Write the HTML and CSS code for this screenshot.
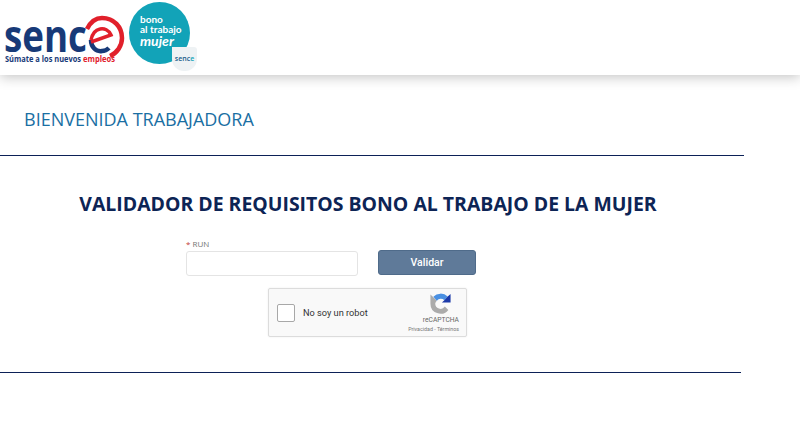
FILE: index.html
```html
<!DOCTYPE html>
<html lang="es">
<head>
<meta charset="utf-8">
<title>Validador de requisitos</title>
<link rel="stylesheet" href="styles.css">
</head>
<body>
<header class="topbar">
  <svg class="logo-sence" viewBox="0 0 128 70" width="128" height="70" aria-label="sence">
    <text class="sence-word" x="4" y="52" textLength="83" lengthAdjust="spacingAndGlyphs">senc</text>
    <path class="sence-arc" d="M87 29 C91 21 97 18 102 18 C114 18 122 27 122 38 C122 46 117 53 110 56" />
    <path class="sence-e-blue" d="M91 40 C91 47 96 52 102 51 C105 51 107 50 109 48" />
    <path class="sence-e-red" d="M91 42 L111 35 C109 30 104 28 100 29 C95 30 92 35 91 40" />
    <text class="sence-tag" x="5" y="62" textLength="76" lengthAdjust="spacingAndGlyphs">Súmate a los nuevos</text>
    <text class="sence-tag sence-tag-red" x="83" y="62" textLength="32" lengthAdjust="spacingAndGlyphs">empleos</text>
  </svg>
  <div class="badge">
    <div class="badge-text">bono<br>al trabajo<br><em class="badge-em">mujer</em></div>
    <div class="badge-seal">senc<span class="badge-seal-e">e</span></div>
  </div>
</header>
<main class="page">
  <h2 class="welcome">BIENVENIDA TRABAJADORA</h2>
  <hr class="rule rule-top">
  <h1 class="title">VALIDADOR DE REQUISITOS BONO AL TRABAJO DE LA MUJER</h1>
  <form class="form">
    <div class="form-row">
      <div class="field">
        <label class="field-label"><span class="req">*</span> RUN</label>
        <input class="field-input" type="text">
      </div>
      <button class="btn" type="button">Validar</button>
    </div>
    <div class="captcha">
      <span class="captcha-box"></span>
      <span class="captcha-text">No soy un robot</span>
      <div class="captcha-brand">
        <svg class="captcha-icon" viewBox="0 0 24 24" width="23" height="23">
          <path fill="#ababab" d="M1.500 12V2.500L4.500 5.500 8.200 9A5.500 5.500 0 0 0 6.500 12 5.500 5.500 0 0 0 16.500 15.200L20.200 18.700A10.500 10.500 0 0 1 1.500 12Z"/>
          <path fill="#4a90e2" d="M4.500 5A10.500 10.500 0 0 1 19.500 4.700L16 8.500A5.500 5.500 0 0 0 8.200 9Z"/>
          <path fill="#1c3aa9" d="M13.500 11 16 8.500 19.500 4.700 22.500 2V11Z"/>
        </svg>
        <span class="captcha-name">reCAPTCHA</span>
        <span class="captcha-links">Privacidad - Términos</span>
      </div>
    </div>
  </form>
  <hr class="rule rule-bottom">
</main>
</body>
</html>
```

FILE: styles.css
```css
html, body {
  margin: 0;
  padding: 0;
  background: #fff;
  overflow: hidden;
}
body {
  font-family: "Open Sans", "Liberation Sans", sans-serif;
  height: 423px;
}
.topbar {
  height: 75px;
  display: flex;
  align-items: flex-start;
  gap: 1px;
  box-shadow: 0 2px 12px rgba(0, 0, 0, 0.24);
  background: #fff;
}
.logo-sence {
  flex: none;
}
.sence-word {
  font-family: "Open Sans", sans-serif;
  font-weight: 700;
  font-size: 44px;
  fill: #173a78;
}
.sence-arc {
  fill: none;
  stroke: #e1202b;
  stroke-width: 4.500;
}
.sence-e-blue {
  fill: none;
  stroke: #173a78;
  stroke-width: 4.500;
}
.sence-e-red {
  fill: none;
  stroke: #e1202b;
  stroke-width: 3.500;
}
.sence-tag {
  font-family: "Open Sans", sans-serif;
  font-weight: 700;
  font-size: 8.500px;
  fill: #173a78;
}
.sence-tag-red {
  fill: #e1202b;
}
.badge {
  position: relative;
  width: 61px;
  height: 62px;
  margin-top: 2px;
  background: #12a3b8;
  border-radius: 50%;
  color: #fff;
}
.badge-text {
  padding: 13px 0 0 11px;
  font-family: Lato, sans-serif;
  font-size: 10px;
  line-height: 9.500px;
  font-weight: 700;
}
.badge-em {
  font-size: 14px;
  line-height: 13px;
  font-weight: 700;
}
.badge-seal {
  position: absolute;
  right: -7px;
  bottom: -7px;
  width: 25px;
  height: 24px;
  border-radius: 0 3px 12px 12px;
  background: #eef2f4;
  color: #1a5c8a;
  font-size: 7px;
  font-weight: 600;
  line-height: 24px;
  text-align: center;
}
.badge-seal-e {
  color: #12a3b8;
}
.page {
  width: 744px;
}
.welcome {
  margin: 0;
  padding: 32px 0 0 24px;
  height: 48px;
  box-sizing: content-box;
  font-weight: 400;
  font-size: 18px;
  line-height: 24px;
  color: #1a6fa3;
}
.rule {
  margin: 0;
  border: 0;
  height: 1px;
  background: #0c2157;
}
.title {
  margin: 36px 0 0;
  font-size: 19.450px;
  line-height: 24px;
  font-weight: 700;
  text-align: center;
  color: #0d2455;
  padding-right: 8px;
}
.form {
  margin-top: 22px;
  display: flex;
  flex-direction: column;
  padding-left: 186px;
}
.form-row {
  display: flex;
  align-items: flex-end;
  gap: 20px;
}
.field {
  display: flex;
  flex-direction: column;
}
.field-label {
  font-size: 8px;
  line-height: 12px;
  color: #747474;
  margin-bottom: 1px;
}
.req {
  color: #c23934;
}
.field-input {
  width: 172px;
  height: 25px;
  box-sizing: border-box;
  border: 1px solid #e4e4e4;
  border-radius: 3px;
  background: #fff;
  padding: 0;
}
.btn {
  width: 98px;
  height: 25px;
  margin-bottom: 1px;
  border: 1px solid #4f6b8a;
  border-radius: 3px;
  background: #5f7a99;
  color: #fff;
  font-family: Roboto, sans-serif;
  font-size: 10.500px;
  font-weight: 500;
  padding: 0;
}
.captcha {
  margin: 12px 0 0 82px;
  width: 199px;
  height: 49px;
  box-sizing: border-box;
  border: 1px solid #dcdcdc;
  border-radius: 2px;
  background: #f9f9f9;
  box-shadow: 0 0 2px rgba(0, 0, 0, 0.08);
  display: flex;
  align-items: center;
  padding-left: 8px;
  font-family: Roboto, sans-serif;
}
.captcha-box {
  width: 18px;
  height: 18px;
  box-sizing: border-box;
  border: 1px solid #a8a8a8;
  border-radius: 2px;
  background: #fff;
}
.captcha-text {
  margin-left: 8px;
  font-size: 9.200px;
  color: #333;
}
.captcha-brand {
  margin-left: auto;
  display: flex;
  flex-direction: column;
  align-items: flex-end;
  padding-right: 7px;
}
.captcha-icon {
  display: block;
  margin-right: 7px;
}
.captcha-name {
  font-size: 6.700px;
  line-height: 9px;
  color: #666;
  margin-top: 1px;
}
.captcha-links {
  font-size: 5.300px;
  line-height: 8px;
  color: #777;
  white-space: nowrap;
}
.rule-bottom {
  margin-top: 35px;
  width: 741px;
}
```
